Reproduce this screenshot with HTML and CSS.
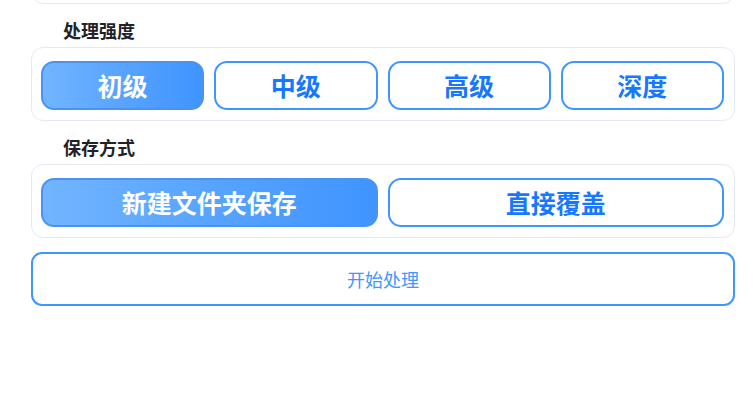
FILE: index.html
```html
<!DOCTYPE html>
<html lang="zh-CN">
<head>
<meta charset="utf-8">
<title>处理设置</title>
<link rel="stylesheet" href="styles.css">
</head>
<body>
<div class="panel">
  <div class="card card-top"></div>

  <div class="label">处理强度</div>
  <div class="card">
    <div class="options four">
      <button class="opt active">初级</button>
      <button class="opt">中级</button>
      <button class="opt">高级</button>
      <button class="opt">深度</button>
    </div>
  </div>

  <div class="label">保存方式</div>
  <div class="card">
    <div class="options two">
      <button class="opt active">新建文件夹保存</button>
      <button class="opt">直接覆盖</button>
    </div>
  </div>

  <button class="start">开始处理</button>
</div>
</body>
</html>
```

FILE: styles.css
```css
* { box-sizing: border-box; }

html, body {
  margin: 0;
  padding: 0;
  background: #ffffff;
  overflow: hidden;
}

body {
  font-family: "Noto Sans CJK SC", "Noto Sans", sans-serif;
  width: 753px;
  height: 394px;
}

.panel {
  display: flex;
  flex-direction: column;
  padding: 0 18px 0 31px;
}

.card {
  border: 1px solid #e4e9f2;
  border-radius: 12px;
  background: #fff;
  padding: 13px 10px 10px 9px;
}

.card-top {
  height: 42px;
  margin-top: -38px;
  padding: 0;
}

.label {
  margin: 15px 0 6px 32px;
  font-size: 18px;
  line-height: 22px;
  font-weight: 700;
  color: #1f2329;
}

.options {
  display: grid;
  gap: 10px;
}

.options.four { grid-template-columns: repeat(4, 1fr); }
.options.two { grid-template-columns: repeat(2, 1fr); }

.opt {
  height: 49px;
  border: 2px solid #4096ff;
  border-radius: 13px;
  background: #fff;
  color: #1677ff;
  font-family: "Noto Sans CJK SC", "Noto Sans", sans-serif;
  font-size: 25px;
  font-weight: 700;
  line-height: 1;
  padding: 0;
  cursor: pointer;
}

.opt.active {
  background: linear-gradient(90deg, #72b5ff 0%, #5aa5ff 45%, #3f94ff 100%);
  border-color: #4a93f5;
  color: #ffffff;
}

.start {
  margin-top: 14px;
  height: 54px;
  border: 2px solid #4096ff;
  border-radius: 11px;
  background: #fff;
  color: #4096ff;
  font-family: "Noto Sans CJK SC", "Noto Sans", sans-serif;
  font-size: 18px;
  font-weight: 400;
  padding: 0;
  cursor: pointer;
}
```
